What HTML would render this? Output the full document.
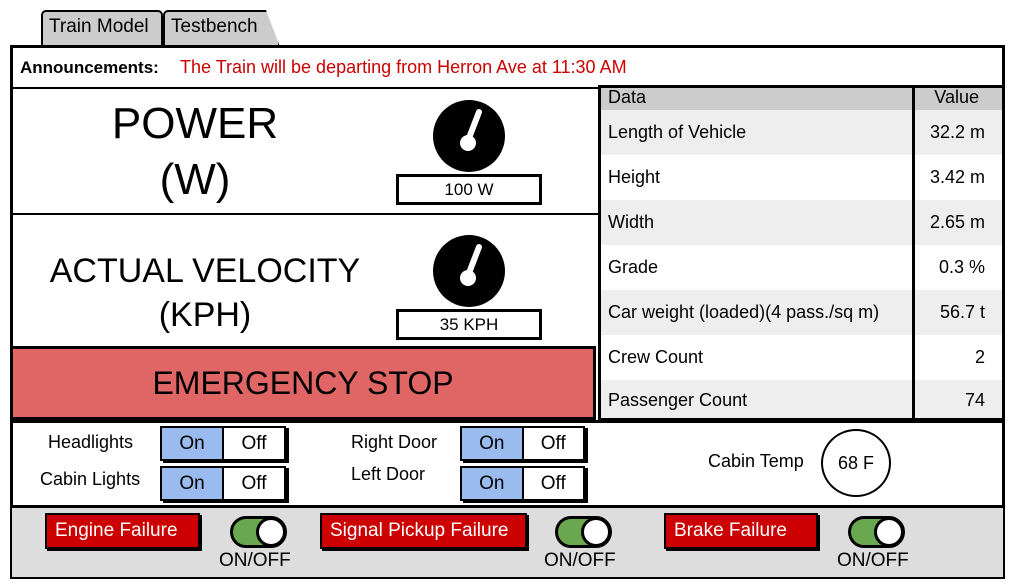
<!DOCTYPE html>
<html><head><meta charset="utf-8"><style>
*{margin:0;padding:0;box-sizing:border-box}
body{width:1011px;height:586px;background:#fff;position:relative;overflow:hidden;font-family:"Liberation Sans",sans-serif;color:#000}
.a{position:absolute}
.tab{position:absolute;top:10px;height:37px;background:#ccc;border:2px solid #000;border-bottom:none;border-radius:5px 5px 0 0;font-size:19px;padding:4px 0 0 6px}
.c{display:flex;align-items:center;justify-content:center;text-align:center}
.row{position:absolute;left:600px;width:403px;height:45px;font-size:18px}
.row span{position:absolute;top:12px}
.row .k{left:8px}.row .v{right:18px}
.tg{position:absolute;height:35px;border:2px solid #000;box-shadow:3px 2px 0 #000;display:flex;font-size:19px}
.tg div{flex:1;display:flex;align-items:center;justify-content:center}
.tg div:first-child{background:#99bbee;border-right:2px solid #000}
.lb{position:absolute;font-size:18px}
.rb{position:absolute;top:513px;height:36px;background:#cc0000;border:2px solid #000;box-shadow:2px 2px 0 #000;color:#fff;font-size:19px;padding:5px 8px}
.sw{position:absolute;top:516px;width:57px;height:32px;background:#6aa84f;border:3px solid #000;border-radius:16px}
.sw::after{content:"";position:absolute;right:-2px;top:-2px;width:30px;height:30px;border:3px solid #000;border-radius:50%;background:#fff;box-sizing:border-box}
.oo{position:absolute;top:550px;font-size:19px}
.g{position:absolute;width:72px;height:72px;border-radius:50%;background:#000}
</style></head><body>
<div class="tab" style="left:41px;width:122px">Train Model</div>
<div class="tab" style="left:163px;width:117px;clip-path:polygon(0 0,88% 0,100% 100%,0 100%)">Testbench</div>
<div class="a" style="left:10px;top:45px;width:995px;height:534px;border:3px solid #000"></div>
<div class="a" style="left:20px;top:58px;font-size:17px;font-weight:bold">Announcements:</div>
<div class="a" style="left:180px;top:57px;font-size:18px;color:#cc0000">The Train will be departing from Herron Ave at 11:30 AM</div>
<div class="a" style="left:12px;top:87px;width:991px;border-top:2px solid #000"></div>
<div class="a" style="left:12px;top:213px;width:586px;border-top:2px solid #000"></div>
<div class="a c" style="left:80px;top:92px;width:230px;height:120px;font-size:44px;line-height:56px">POWER<br>(W)</div>
<div class="a c" style="left:20px;top:248px;width:370px;height:90px;font-size:34px;line-height:44px">ACTUAL VELOCITY<br>(KPH)</div>
<div class="g" style="left:433px;top:100px"></div>
<svg class="a" style="left:433px;top:100px" width="72" height="72"><line x1="46" y1="12" x2="36" y2="38" stroke="#fff" stroke-width="6" stroke-linecap="round"/><circle cx="35" cy="43" r="8" fill="#fff"/></svg>
<div class="g" style="left:433px;top:235px"></div>
<svg class="a" style="left:433px;top:235px" width="72" height="72"><line x1="46" y1="12" x2="36" y2="38" stroke="#fff" stroke-width="6" stroke-linecap="round"/><circle cx="35" cy="43" r="8" fill="#fff"/></svg>
<div class="a c" style="left:396px;top:174px;width:146px;height:31px;border:3px solid #000;font-size:17px">100 W</div>
<div class="a c" style="left:396px;top:309px;width:146px;height:31px;border:3px solid #000;font-size:17px">35 KPH</div>
<div class="a c" style="left:10px;top:346px;width:586px;height:74px;background:#e06666;border:3px solid #000;font-size:32px">EMERGENCY STOP</div>
<div class="row" style="top:87px;height:23px;background:#ccc"><span class="k" style="top:0">Data</span><span class="v" style="top:0;right:24px">Value</span></div>
<div class="row" style="top:110px;background:#eee"><span class="k">Length of Vehicle</span><span class="v">32.2 m</span></div>
<div class="row" style="top:155px"><span class="k">Height</span><span class="v">3.42 m</span></div>
<div class="row" style="top:200px;background:#eee"><span class="k">Width</span><span class="v">2.65 m</span></div>
<div class="row" style="top:245px"><span class="k">Grade</span><span class="v">0.3 %</span></div>
<div class="row" style="top:290px;background:#eee"><span class="k">Car weight (loaded)(4 pass./sq m)</span><span class="v">56.7 t</span></div>
<div class="row" style="top:335px"><span class="k">Crew Count</span><span class="v">2</span></div>
<div class="row" style="top:380px;height:40px;background:#eee"><span class="k" style="top:10px">Passenger Count</span><span class="v" style="top:10px">74</span></div>
<div class="a" style="left:598px;top:85px;width:407px;height:336px;border:3px solid #000"></div>
<div class="a" style="left:912px;top:85px;height:336px;border-left:3px solid #000"></div>
<div class="a" style="left:10px;top:420px;width:995px;border-top:3px solid #000"></div>
<div class="lb" style="left:48px;top:432px">Headlights</div>
<div class="lb" style="left:40px;top:469px">Cabin Lights</div>
<div class="lb" style="left:351px;top:432px">Right Door</div>
<div class="lb" style="left:351px;top:464px">Left Door</div>
<div class="tg" style="left:160px;top:426px;width:126px"><div>On</div><div>Off</div></div>
<div class="tg" style="left:160px;top:466px;width:126px"><div>On</div><div>Off</div></div>
<div class="tg" style="left:460px;top:426px;width:125px"><div>On</div><div>Off</div></div>
<div class="tg" style="left:460px;top:466px;width:125px"><div>On</div><div>Off</div></div>
<div class="lb" style="left:708px;top:451px">Cabin Temp</div>
<div class="a c" style="left:821px;top:429px;width:70px;height:68px;border:2px solid #000;border-radius:50%;font-size:18px">68 F</div>
<div class="a" style="left:12px;top:505px;width:991px;height:72px;background:#ddd;border-top:3px solid #000"></div>
<div class="rb" style="left:45px;width:155px">Engine Failure</div>
<div class="rb" style="left:320px;width:207px">Signal Pickup Failure</div>
<div class="rb" style="left:664px;width:154px">Brake Failure</div>
<div class="sw" style="left:230px"></div>
<div class="sw" style="left:555px"></div>
<div class="sw" style="left:848px"></div>
<div class="oo" style="left:219px">ON/OFF</div>
<div class="oo" style="left:544px">ON/OFF</div>
<div class="oo" style="left:837px">ON/OFF</div>
</body></html>
